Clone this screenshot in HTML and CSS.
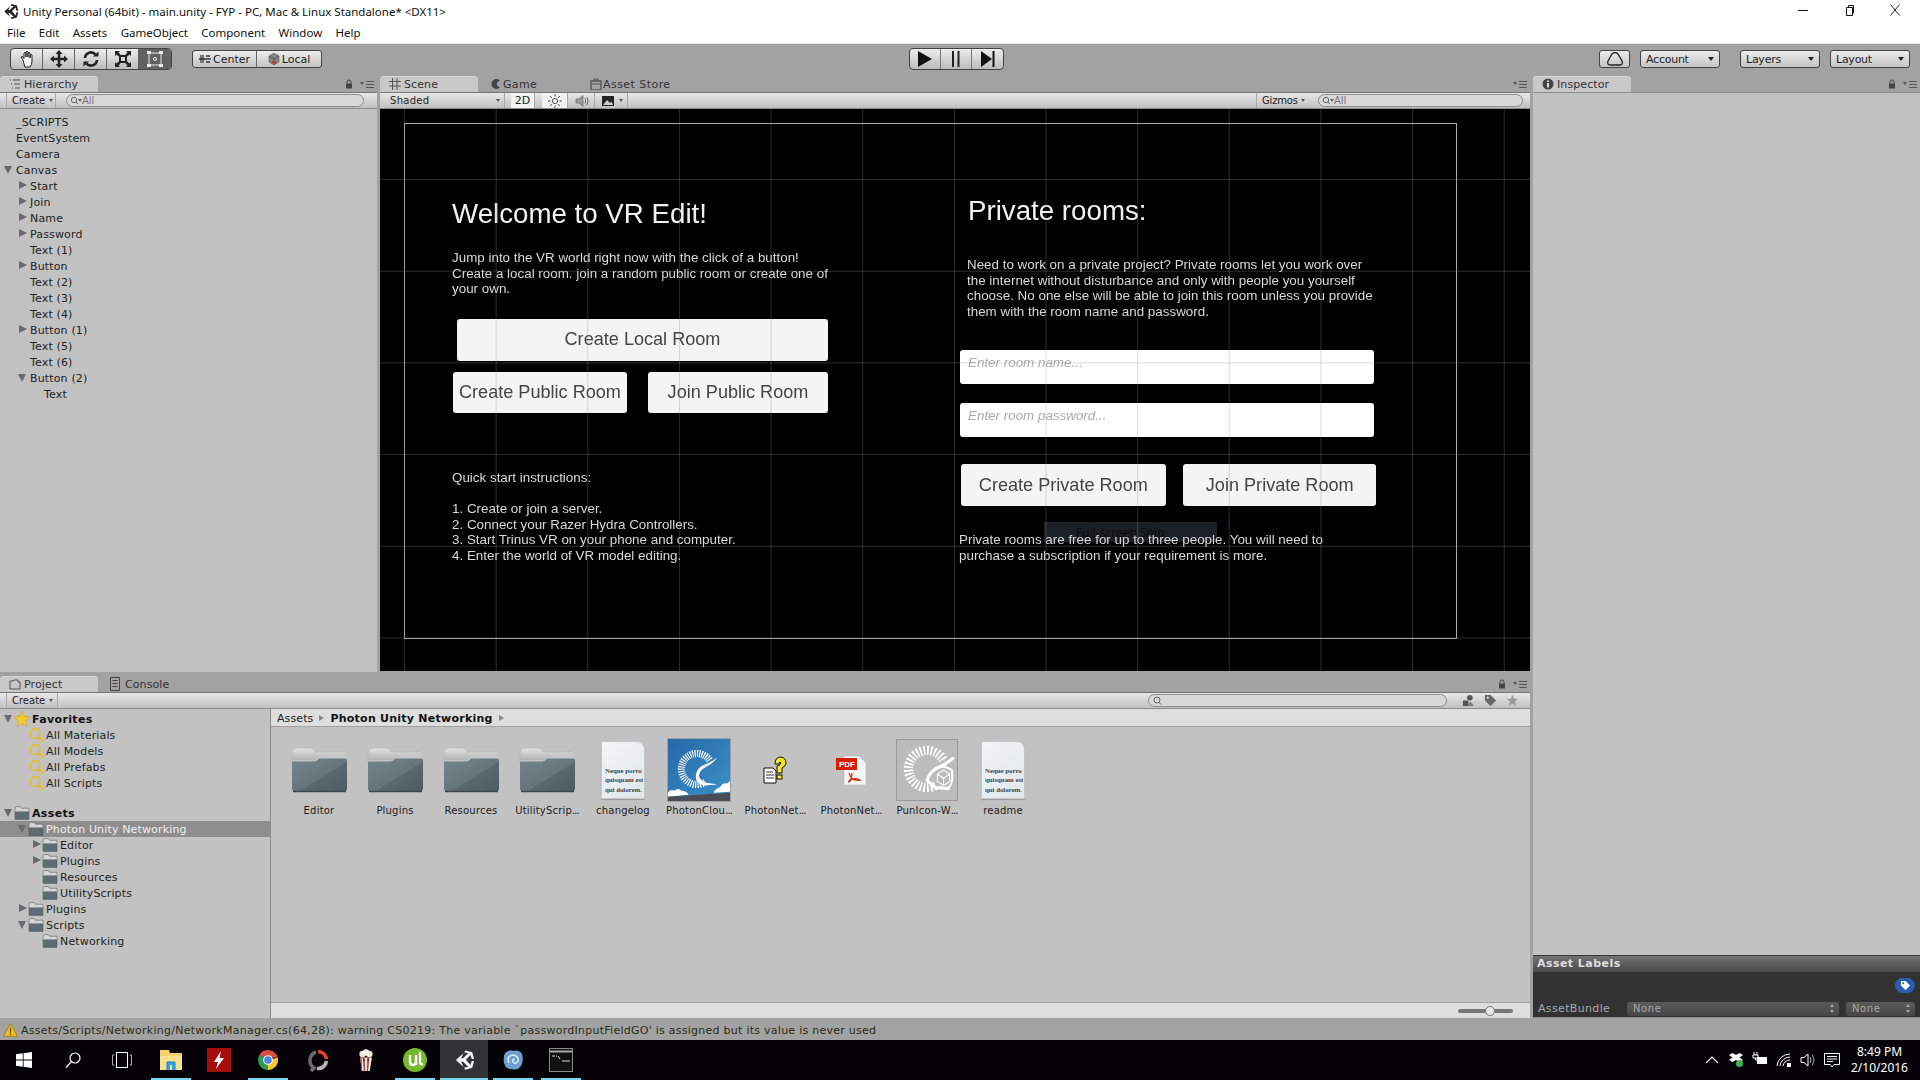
FILE: index.html
```html
<!DOCTYPE html>
<html lang="en">
<head>
<meta charset="utf-8">
<title>Unity Personal</title>
<link rel="stylesheet" href="styles.css">
</head>
<body>
<svg class="defs" aria-hidden="true">
  <defs>
    <linearGradient id="gFolder" x1="0" y1="0" x2="1" y2="1"><stop offset="0" stop-color="#76848c"/><stop offset=".55" stop-color="#66747c"/><stop offset=".56" stop-color="#5a6870"/><stop offset="1" stop-color="#4c5a62"/></linearGradient>
    <linearGradient id="gFolderTop" x1="0" y1="0" x2="0" y2="1"><stop offset="0" stop-color="#e2e2e2"/><stop offset="1" stop-color="#a8a8a8"/></linearGradient>
    <linearGradient id="gBlue" x1="0" y1="0" x2="1" y2="1"><stop offset="0" stop-color="#2867a8"/><stop offset="1" stop-color="#3b93c8"/></linearGradient>
    <symbol id="folderBig" viewBox="0 0 57 46">
      <path d="M1 8 Q1 1 6 1 H19 Q22 1 24 5 H53 Q56 5 56 9 V16 H1Z" fill="url(#gFolderTop)" stroke="#b0b0b0" stroke-width=".5"/>
      <path d="M1 14 H23 Q26 14 28 11 H53 Q56 11 56 14 V41 Q56 45 52 45 H5 Q1 45 1 41Z" fill="url(#gFolder)"/>
      <path d="M1 14 H23 Q26 14 28 11 H56" fill="none" stroke="#e4e4e4" stroke-width=".7"/>
      <path d="M2 44.5 H55" stroke="#3c464c" stroke-width="1.4"/>
    </symbol>
    <symbol id="folderSmall" viewBox="0 0 15 14">
      <path d="M1 3 Q1 1 2 1 H6 L7 2.5 H14 V6 H1Z" fill="#d6d6d6" stroke="#666" stroke-width=".6"/>
      <path d="M1 5 H14 V13 H1Z" fill="#5d6b72" stroke="#4a4f52" stroke-width=".5"/>
      <path d="M1 5 H14" stroke="#eee" stroke-width="1"/>
    </symbol>
    <symbol id="searchGold" viewBox="0 0 15 16">
      <circle cx="6.5" cy="6.5" r="5" fill="none" stroke="#e6c02a" stroke-width="1.6"/>
      <path d="M10 10 L14 14.5" stroke="#e6c02a" stroke-width="2.2" stroke-linecap="round"/>
    </symbol>
    <symbol id="unity" viewBox="0 0 24 24">
      <path d="M13.5 1.5 L21 3.5 L23 11 L20.5 11 L19 6.5 L14 11.8 H14.2 L19 17.5 L20.5 13 L23 13 L21 20.5 L13.5 22.5 L12 20.5 L16.5 19.3 L11 14 H8 L3.5 12 L8 10 H11 L16.5 4.7 L12 3.5Z" fill="currentColor"/>
      <path d="M3 12 L11.5 4.5 L8.5 11 Z M3 12 L11.5 19.5 L8.5 13Z" fill="currentColor"/>
    </symbol>
    <symbol id="lock" viewBox="0 0 8 10"><path d="M2 4.5 V3 a2 2 0 0 1 4 0 V4.5" fill="none" stroke="#444" stroke-width="1"/><rect x="1" y="4.5" width="6" height="5" fill="#444"/></symbol>
    <symbol id="panelMenu" viewBox="0 0 14 8"><path d="M0 2 H4 L2 5Z" fill="#555"/><path d="M6 1.5 H14 M6 4.5 H14 M6 7.5 H14" stroke="#555"/></symbol>
  </defs>
</svg>

<div class="app">
  <header class="titlebar">
    <div class="title-row">
      <svg class="title-logo"><use href="#unity"/></svg>
      <span>Unity Personal (64bit) - main.unity - FYP - PC, Mac &amp; Linux Standalone* &lt;DX11&gt;</span>
      <div class="win-controls">
        <svg class="win-icon" viewBox="0 0 12 12"><path d="M1 6.5 H11" stroke="#111"/></svg>
        <svg class="win-icon" viewBox="0 0 12 12"><path d="M3.5 3.5 H9.5 V11.5 H3.5Z M5.5 3.5 V1.5 H10.5 V9 H9.5" fill="none" stroke="#111"/></svg>
        <svg class="win-icon" viewBox="0 0 12 12"><path d="M1.5 .5 L10.5 11.5 M10.5 .5 L1.5 11.5" stroke="#111" stroke-width=".9"/></svg>
      </div>
    </div>
    <nav class="menu-row">
      <span>File</span><span>Edit</span><span>Assets</span><span>GameObject</span><span>Component</span><span>Window</span><span>Help</span>
    </nav>
  </header>

  <div class="main-toolbar">
    <div class="tool-group">
      <div class="tool-btn"><svg class="tool-icon" viewBox="0 0 18 18"><path d="M5 10 L3 7 Q3.5 5.8 5 7 L6 8.5 V3 Q7 1.6 8 3 V7 V2 Q9 .8 10 2 V7 V3 Q11 2 12 3 V8 V5 Q13 4 14 5 V11 Q14 15 12 17 H7 Q6 14 5 10Z" fill="#f4f4f4" stroke="#222" stroke-width="1"/></svg></div>
      <div class="tool-btn"><svg class="tool-icon" viewBox="0 0 18 18"><path d="M9 0 L12.5 4 H10.3 V7.7 H14 V5.5 L18 9 L14 12.5 V10.3 H10.3 V14 H12.5 L9 18 L5.5 14 H7.7 V10.3 H4 V12.5 L0 9 L4 5.5 V7.7 H7.7 V4 H5.5Z" fill="#222"/></svg></div>
      <div class="tool-btn"><svg class="tool-icon" viewBox="0 0 18 18"><path d="M3 8 A6 6 0 0 1 13.5 4.5 M15 10 A6 6 0 0 1 4.5 13.5" fill="none" stroke="#222" stroke-width="2.6"/><path d="M11 6.5 H16.5 V1.5Z M7 11.5 H1.5 V16.5Z" fill="#222"/></svg></div>
      <div class="tool-btn"><svg class="tool-icon" viewBox="0 0 18 18"><rect x="6" y="6" width="6" height="6" fill="none" stroke="#222" stroke-width="2"/><path d="M1 1 H6 L4.5 2.5 L6.5 4.5 L4.5 6.5 L2.5 4.5 L1 6Z M17 1 H12 L13.5 2.5 L11.5 4.5 L13.5 6.5 L15.5 4.5 L17 6Z M1 17 H6 L4.5 15.5 L6.5 13.5 L4.5 11.5 L2.5 13.5 L1 12Z M17 17 H12 L13.5 15.5 L11.5 13.5 L13.5 11.5 L15.5 13.5 L17 12Z" fill="#222"/></svg></div>
      <div class="tool-btn tool-on"><svg class="tool-icon" viewBox="0 0 18 18"><rect x="3" y="3" width="12" height="12" fill="none" stroke="#e8e8e8" stroke-width="1"/><rect x="1" y="1" width="4" height="3" fill="#eee"/><rect x="13" y="1" width="4" height="3" fill="#eee"/><rect x="1" y="14" width="4" height="3" fill="#eee"/><rect x="13" y="14" width="4" height="3" fill="#eee"/><circle cx="9" cy="9" r="1.5" fill="none" stroke="#eee"/></svg></div>
    </div>
    <div class="pivot-group">
      <div class="pivot-btn pivot-center"><svg class="pivot-icon" viewBox="0 0 12 12"><path d="M1 2 H5 V10 H1Z" fill="#777"/><path d="M0 6 H12 M7 3 H11 M7 9 H11" stroke="#333" stroke-width="1.4"/></svg>Center</div>
      <div class="pivot-btn"><svg class="pivot-icon" viewBox="0 0 12 12"><path d="M6 0 L11 3 V9 L6 12 L1 9 V3Z" fill="#888" stroke="#555" stroke-width=".6"/><path d="M1 3 L6 6 L11 3 M6 6 V12" fill="none" stroke="#444" stroke-width=".8"/><path d="M3 9 L6 11.5 L9 9 L6 7.5Z" fill="#b04040"/></svg>Local</div>
    </div>
    <div class="play-group">
      <div class="play-btn"><svg class="play-icon" viewBox="0 0 16 18"><path d="M1 1 L15 9 L1 17Z" fill="#111"/></svg></div>
      <div class="play-btn"><svg class="play-icon" viewBox="0 0 16 18"><path d="M5 1 V17 M10.5 1 V17" stroke="#222" stroke-width="2"/></svg></div>
      <div class="play-btn"><svg class="play-icon" viewBox="0 0 16 18"><path d="M1 1 L12 9 L1 17Z" fill="#111"/><path d="M13.5 1 V17" stroke="#111" stroke-width="2"/></svg></div>
    </div>
    <div class="right-tools">
      <div class="drop-btn cloud-btn"><svg class="cloud-icon" viewBox="0 0 16 14"><path d="M3 13 Q0 13 1 9 L5 2 Q8 -1 11 2 L15 9 Q16 13 13 13Z" fill="none" stroke="#222" stroke-width="1.3"/></svg></div>
      <div class="drop-btn account-btn"><span>Account</span><i class="caret"></i></div>
      <div class="drop-btn layers-btn"><span>Layers</span><i class="caret"></i></div>
      <div class="drop-btn layout-btn"><span>Layout</span><i class="caret"></i></div>
    </div>
  </div>

  <div class="workspace">
    <div class="left-col">
      <div class="top-row">
        <section class="panel hierarchy">
          <div class="tab-row">
            <div class="tab active"><svg class="tab-icon" viewBox="0 0 12 12"><path d="M1 2 H2 M4 2 H11 M2 6 H3 M5 6 H11 M3 10 H4 M6 10 H11" stroke="#555"/></svg>Hierarchy</div>
            <div class="tab-end"><svg class="lock-icon"><use href="#lock"/></svg><svg class="menu-icon"><use href="#panelMenu"/></svg></div>
          </div>
          <div class="panel-bar">
            <div class="bar-create">Create<i class="caret small"></i></div>
            <div class="search-pill hier-search"><svg class="mag" viewBox="0 0 12 10"><circle cx="4" cy="4" r="2.7" fill="none" stroke="#666"/><path d="M6 6 L8 8" stroke="#666"/><path d="M8 3 H12 L10 6Z" fill="#666"/></svg>All</div>
          </div>
          <div class="tree hier-tree">
            <div class="row d0"><i class="slot"></i>_SCRIPTS</div>
            <div class="row d0"><i class="slot"></i>EventSystem</div>
            <div class="row d0"><i class="slot"></i>Camera</div>
            <div class="row d0"><i class="slot open"></i>Canvas</div>
            <div class="row d1"><i class="slot closed"></i>Start</div>
            <div class="row d1"><i class="slot closed"></i>Join</div>
            <div class="row d1"><i class="slot closed"></i>Name</div>
            <div class="row d1"><i class="slot closed"></i>Password</div>
            <div class="row d1"><i class="slot"></i>Text (1)</div>
            <div class="row d1"><i class="slot closed"></i>Button</div>
            <div class="row d1"><i class="slot"></i>Text (2)</div>
            <div class="row d1"><i class="slot"></i>Text (3)</div>
            <div class="row d1"><i class="slot"></i>Text (4)</div>
            <div class="row d1"><i class="slot closed"></i>Button (1)</div>
            <div class="row d1"><i class="slot"></i>Text (5)</div>
            <div class="row d1"><i class="slot"></i>Text (6)</div>
            <div class="row d1"><i class="slot open"></i>Button (2)</div>
            <div class="row d2"><i class="slot"></i>Text</div>
          </div>
        </section>

        <section class="panel scene">
          <div class="tab-row">
            <div class="tab active"><svg class="tab-icon" viewBox="0 0 12 12"><path d="M3.5 0 V12 M8 0 V12 M0 3.5 H12 M0 8 H12" stroke="#555"/></svg>Scene</div>
            <div class="tab game-tab"><svg class="tab-icon" viewBox="0 0 12 12"><path d="M10 2.5 A5 5 0 1 0 10 9.5 L7 7.5 V4.5Z" fill="#444"/></svg>Game</div>
            <div class="tab store-tab"><svg class="tab-icon" viewBox="0 0 12 12"><path d="M1 3 H11 V12 H1Z" fill="none" stroke="#555" stroke-width="1.3"/><path d="M4 3 V1 H8 V3" fill="none" stroke="#555"/><path d="M1 6 H11" stroke="#555"/></svg>Asset Store</div>
            <div class="tab-end"><svg class="menu-icon"><use href="#panelMenu"/></svg></div>
          </div>
          <div class="panel-bar scene-bar">
            <div class="shaded">Shaded<i class="caret small"></i></div>
            <div class="scene-toggle on twod">2D</div>
            <div class="scene-toggle on"><svg class="scene-ico" viewBox="0 0 14 14"><circle cx="7" cy="7" r="2.6" fill="none" stroke="#555"/><path d="M7 0 V2.5 M7 11.5 V14 M0 7 H2.5 M11.5 7 H14 M2 2 L4 4 M10 10 L12 12 M12 2 L10 4 M4 10 L2 12" stroke="#555"/></svg></div>
            <div class="scene-toggle"><svg class="scene-ico" viewBox="0 0 14 14"><path d="M1 5 H4 L8 1.5 V12.5 L4 9 H1Z" fill="#999" stroke="#666" stroke-width=".7"/><path d="M10 4.5 Q11.5 7 10 9.5 M12 3 Q14 7 12 11" fill="none" stroke="#666"/></svg></div>
            <div class="scene-toggle img-toggle"><svg class="scene-ico" viewBox="0 0 14 14"><rect x="1" y="2" width="12" height="10" fill="#222"/><path d="M2 11 L6 6 L9 9 L10.5 7.5 L12 11Z" fill="#ccc"/></svg><i class="caret small"></i></div>
            <div class="bar-spacer"></div>
            <div class="gizmos">Gizmos<i class="caret small"></i></div>
            <div class="search-pill scene-search"><svg class="mag" viewBox="0 0 12 10"><circle cx="4" cy="4" r="2.7" fill="none" stroke="#666"/><path d="M6 6 L8 8" stroke="#666"/><path d="M8 3 H12 L10 6Z" fill="#666"/></svg>All</div>
          </div>
          <div class="viewport">
            <div class="game-frame">
              <div class="game-col">
                <h1 class="game-title">Welcome to VR Edit!</h1>
                <p class="game-text intro">Jump into the VR world right now with the click of a button!<br>Create a local room. join a random public room or create one of<br>your own.</p>
                <div class="game-btn local-btn">Create Local Room</div>
                <div class="btn-row public-row">
                  <div class="game-btn pub-create">Create Public Room</div>
                  <div class="game-btn pub-join">Join Public Room</div>
                </div>
                <p class="game-text quick">Quick start instructions:<br><br>1. Create or join a server.<br>2. Connect your Razer Hydra Controllers.<br>3. Start Trinus VR on your phone and computer.<br>4. Enter the world of VR model editing.</p>
              </div>
              <div class="game-col right-col">
                <h1 class="game-title private-title">Private rooms:</h1>
                <p class="game-text private-text">Need to work on a private project? Private rooms let you work over<br>the internet without disturbance and only with people you yourself<br>choose. No one else will be able to join this room unless you provide<br>them with the room name and password.</p>
                <div class="game-input first-input">Enter room name...</div>
                <div class="game-input">Enter room password...</div>
                <div class="btn-row private-row">
                  <div class="game-btn priv-create">Create Private Room</div>
                  <div class="game-btn priv-join">Join Private Room</div>
                </div>
                <div class="snip-ghost">Full-screen Snip</div>
                <p class="game-text note">Private rooms are free for up to three people. You will need to<br>purchase a subscription if your requirement is more.</p>
              </div>
            </div>
            <div class="grid-lines"></div>
          </div>
        </section>
      </div>

      <section class="panel project">
        <div class="tab-row project-tabs">
          <div class="tab active"><svg class="tab-icon" viewBox="0 0 12 12"><path d="M1 3 H4 L5 2 H9 V4 H11 V11 H1Z" fill="none" stroke="#555"/></svg>Project</div>
          <div class="tab console-tab"><svg class="tab-icon console-ico" viewBox="0 0 10 14"><path d="M.5 .5 H9.5 V13.5 H.5Z M2.5 3.5 H7.5 M2.5 6.5 H7.5 M2.5 9.5 H7.5" fill="none" stroke="#444"/></svg>Console</div>
          <div class="tab-end"><svg class="lock-icon"><use href="#lock"/></svg><svg class="menu-icon"><use href="#panelMenu"/></svg></div>
        </div>
        <div class="panel-bar project-bar">
          <div class="bar-create project-create">Create<i class="caret small"></i></div>
          <div class="bar-spacer"></div>
          <div class="search-pill project-search"><svg class="mag" viewBox="0 0 12 10"><circle cx="5" cy="4" r="3" fill="none" stroke="#666"/><path d="M7 6.5 L9 8.5" stroke="#666"/></svg></div>
          <svg class="bar-ico" viewBox="0 0 14 14"><circle cx="8.5" cy="4" r="3" fill="#555"/><rect x="1" y="7" width="6" height="6" fill="#555"/><path d="M9 8 L13 13 H6Z" fill="#777"/></svg>
          <svg class="bar-ico" viewBox="0 0 14 14"><path d="M1 1 H7 L13 7 L7 13 L1 7Z" fill="#666"/><circle cx="4" cy="4" r="1.2" fill="#ddd"/></svg>
          <svg class="bar-ico" viewBox="0 0 14 14"><path d="M7 1 L8.8 5 L13 5.4 L9.8 8.2 L10.8 12.6 L7 10.2 L3.2 12.6 L4.2 8.2 L1 5.4 L5.2 5Z" fill="#999"/></svg>
        </div>
        <div class="project-body">
          <div class="tree project-tree">
            <div class="row d0 head"><i class="slot open"></i><svg class="ti" viewBox="0 0 16 16"><path d="M8 0 L10.3 5.4 L16 6 L11.7 9.8 L13 15.5 L8 12.5 L3 15.5 L4.3 9.8 L0 6 L5.7 5.4Z" fill="#f2cb30" stroke="#c89a14" stroke-width=".5"/></svg>Favorites</div>
            <div class="row d1"><i class="slot"></i><svg class="ti"><use href="#searchGold"/></svg>All Materials</div>
            <div class="row d1"><i class="slot"></i><svg class="ti"><use href="#searchGold"/></svg>All Models</div>
            <div class="row d1"><i class="slot"></i><svg class="ti"><use href="#searchGold"/></svg>All Prefabs</div>
            <div class="row d1"><i class="slot"></i><svg class="ti"><use href="#searchGold"/></svg>All Scripts</div>
            <div class="row d0 head assets-head"><i class="slot open"></i><svg class="ti"><use href="#folderSmall"/></svg>Assets</div>
            <div class="row d1 selected"><i class="slot open"></i><svg class="ti"><use href="#folderSmall"/></svg>Photon Unity Networking</div>
            <div class="row d2"><i class="slot closed"></i><svg class="ti"><use href="#folderSmall"/></svg>Editor</div>
            <div class="row d2"><i class="slot closed"></i><svg class="ti"><use href="#folderSmall"/></svg>Plugins</div>
            <div class="row d2"><i class="slot"></i><svg class="ti"><use href="#folderSmall"/></svg>Resources</div>
            <div class="row d2"><i class="slot"></i><svg class="ti"><use href="#folderSmall"/></svg>UtilityScripts</div>
            <div class="row d1"><i class="slot closed"></i><svg class="ti"><use href="#folderSmall"/></svg>Plugins</div>
            <div class="row d1"><i class="slot open"></i><svg class="ti"><use href="#folderSmall"/></svg>Scripts</div>
            <div class="row d2"><i class="slot"></i><svg class="ti"><use href="#folderSmall"/></svg>Networking</div>
          </div>
          <div class="asset-pane">
            <div class="crumbs"><span>Assets</span><i class="crumb-arrow"></i><b>Photon Unity Networking</b><i class="crumb-arrow"></i></div>
            <div class="asset-grid">
              <div class="asset"><div class="asset-icon"><svg class="big-folder"><use href="#folderBig"/></svg></div><div class="asset-label">Editor</div></div>
              <div class="asset"><div class="asset-icon"><svg class="big-folder"><use href="#folderBig"/></svg></div><div class="asset-label">Plugins</div></div>
              <div class="asset"><div class="asset-icon"><svg class="big-folder"><use href="#folderBig"/></svg></div><div class="asset-label">Resources</div></div>
              <div class="asset"><div class="asset-icon"><svg class="big-folder"><use href="#folderBig"/></svg></div><div class="asset-label">UtilityScrip<span class="dots">...</span></div></div>
              <div class="asset"><div class="asset-icon"><div class="doc">Neque porro<br>quisquam est<br>qui dolorem.</div></div><div class="asset-label">changelog</div></div>
              <div class="asset"><div class="asset-icon"><svg class="thumb blue-thumb" viewBox="0 0 60 60"><rect width="60" height="60" fill="url(#gBlue)"/><path d="M40.3 20.4 A15 15 0 1 0 36.6 41.3" fill="none" stroke="#fff" stroke-width="7" stroke-dasharray="1.1 1.1"/><path d="M48 18 Q42 25 35 28 Q30 31 30 36 Q31 40 36 42 L48 44 L34 45 Q26 42 27 35 Q28 28 35 25 Q41 23 48 18Z" fill="#fff"/><path d="M0 52 Q2 48 6 50 Q10 47 13 50 Q18 50 20 54 L0 56Z M60 41 V51 L44 52 Q46 48 50 47 Q53 42 57 43Z" fill="#fff"/><path d="M0 56 L60 52 V60 H0Z" fill="#4a4c54"/></svg></div><div class="asset-label">PhotonClou<span class="dots">...</span></div></div>
              <div class="asset"><div class="asset-icon"><svg class="help" viewBox="0 0 24 29"><path d="M1 12 H10 L13 15 V27 H1Z" fill="#fff" stroke="#111"/><path d="M3 16 H10 M3 19 H11 M3 22 H11" stroke="#333"/><path d="M12 8 Q12 1 18 1 Q23 2 23 7 Q23 10 19 12 V17 H14 V10 Q18 9 18 7 Q17 5 16 7 V8Z" fill="#f5ea1e" stroke="#111"/><rect x="14" y="19" width="5" height="4" fill="#f5ea1e" stroke="#111"/></svg></div><div class="asset-label">PhotonNet<span class="dots">...</span></div></div>
              <div class="asset"><div class="asset-icon"><svg class="pdf" viewBox="0 0 32 31"><path d="M9 1 H24 L31 8 V30 H9Z" fill="#f4f5f6" stroke="#bbb" stroke-width=".6"/><rect x="1" y="3" width="21" height="12" fill="#d81e05"/><text x="4" y="12" class="pdf-text">PDF</text><path d="M14 18 Q17 27 25 25 Q18 22 15 26 Q13 28 14 26 Q17 24 17 18" fill="none" stroke="#d8301a" stroke-width="1.3"/></svg></div><div class="asset-label">PhotonNet<span class="dots">...</span></div></div>
              <div class="asset"><div class="asset-icon"><svg class="thumb" viewBox="0 0 60 60"><rect x=".5" y=".5" width="59" height="59" fill="#bcbcbc" stroke="#999"/><path d="M45.6 20 A18 18 0 1 0 39 44.6" fill="none" stroke="#fff" stroke-width="9" stroke-dasharray="1.7 1.7"/><path d="M56 18 Q46 26 38 29 Q32 33 30 40 L38 47 L52 48" fill="none" stroke="#fff" stroke-width="3"/><path d="M38 29 Q46 24 54 30 Q56 44 50 48" fill="none" stroke="#fff" stroke-width="2"/><path d="M46 30 L52 34 V41 L46 45 L40 41 V34Z M40 34 L46 38 L52 34 M46 38 V45" fill="none" stroke="#fff"/></svg></div><div class="asset-label">PunIcon-W<span class="dots">...</span></div></div>
              <div class="asset"><div class="asset-icon"><div class="doc">Neque porro<br>quisquam est<br>qui dolorem.</div></div><div class="asset-label">readme</div></div>
            </div>
            <div class="asset-foot"><div class="slider"><i class="knob"></i></div></div>
          </div>
        </div>
      </section>
    </div>

    <aside class="panel inspector">
      <div class="tab-row">
        <div class="tab active"><svg class="tab-icon info" viewBox="0 0 12 12"><circle cx="6" cy="6" r="5.5" fill="#444"/><path d="M6 2.5 V4 M6 5 V9.5" stroke="#fff" stroke-width="1.6"/></svg>Inspector</div>
        <div class="tab-end"><svg class="lock-icon"><use href="#lock"/></svg><svg class="menu-icon"><use href="#panelMenu"/></svg></div>
      </div>
      <div class="inspector-body"></div>
      <div class="labels-head">Asset Labels</div>
      <div class="labels-body">
        <div class="tag-row"><div class="tag-pill"><svg class="tag-ico" viewBox="0 0 12 12"><path d="M1 1 H6 L11 6 L6 11 L1 6Z" fill="#fff"/><circle cx="3.5" cy="3.5" r="1" fill="#2a5db0"/></svg></div></div>
        <div class="bundle-row">
          <span class="bundle-label">AssetBundle</span>
          <div class="dark-drop wide-drop"><span>None</span><i class="updown"></i></div>
          <div class="dark-drop narrow-drop"><span>None</span><i class="updown"></i></div>
        </div>
      </div>
    </aside>
  </div>

  <div class="statusbar">
    <svg class="warn" viewBox="0 0 14 13"><path d="M7 .5 L13.5 12.5 H.5Z" fill="#f0c020" stroke="#8a6a10" stroke-width=".6"/><path d="M7 4.5 V9 M7 10 V11.5" stroke="#6a5008" stroke-width="1.2"/></svg>
    <span>Assets/Scripts/Networking/NetworkManager.cs(64,28): warning CS0219: The variable `passwordInputFieldGO' is assigned but its value is never used</span>
  </div>

  <footer class="taskbar">
    <div class="task-slot"><svg class="t-ico t16" viewBox="0 0 16 16"><path d="M0 2.3 L6.8 1.3 V7.6 H0Z M7.6 1.2 L16 0 V7.6 H7.6Z M0 8.4 H6.8 V14.7 L0 13.7Z M7.6 8.4 H16 V16 L7.6 14.8Z" fill="#fff"/></svg></div>
    <div class="task-slot"><svg class="t-ico t16" viewBox="0 0 16 16"><circle cx="10" cy="6" r="5" fill="none" stroke="#fff" stroke-width="1.2"/><path d="M6.4 9.6 L1 15.5" stroke="#fff" stroke-width="1.4"/></svg></div>
    <div class="task-slot"><svg class="t-ico t20" viewBox="0 0 20 16"><rect x="4.5" y=".5" width="11" height="15" fill="none" stroke="#fff"/><path d="M2.5 3 H.5 V13 H2.5 M17.5 3 H19.5 V13 H17.5" fill="none" stroke="#aaa"/></svg></div>
    <div class="task-slot run"><svg class="t-ico t22" viewBox="0 0 22 22"><path d="M0 1 H9 L10 4 H22 V21 H0Z" fill="#f3d26a"/><path d="M0 7 H22 V21 H0Z" fill="#f8e08e"/><path d="M7 13 H15 V21 H12 V16 H10 V21 H7Z" fill="#2aa8e8"/><path d="M7 21 V13 H15 V21" fill="none" stroke="#1c86c0"/></svg></div>
    <div class="task-slot"><svg class="t-ico t24" viewBox="0 0 24 24"><rect width="24" height="24" fill="#a60d0d"/><path d="M14 3 L7 14 H11 L9 21 L17 10 H12.5Z" fill="#fff"/></svg></div>
    <div class="task-slot run"><svg class="t-ico t22" viewBox="0 0 24 24"><path d="M12 12 L2.6 6.5 A11 11 0 0 1 22.7 9.5 H12Z" fill="#dd4b3e"/><path d="M12 12 L12 23 A11 11 0 0 1 2.6 6.5Z" fill="#2f9e4c"/><path d="M12 12 L22.7 9.5 A11 11 0 0 1 12 23Z" fill="#f6c82e"/><circle cx="12" cy="12" r="5.3" fill="#fff"/><circle cx="12" cy="12" r="4.2" fill="#4a86e8"/></svg></div>
    <div class="task-slot"><svg class="t-ico t24" viewBox="0 0 24 24"><path d="M11 4 A9 9 0 0 0 9 20 L6 23" fill="none" stroke="#6a6a6a" stroke-width="3.6"/><path d="M13 3.5 A8.5 8.5 0 0 1 21.5 11" fill="none" stroke="#e2422b" stroke-width="3.6"/><path d="M21.5 13 A8.5 8.5 0 0 1 12 20.5" fill="none" stroke="#b8b8b8" stroke-width="3.6"/></svg></div>
    <div class="task-slot"><svg class="t-ico t22" viewBox="0 0 18 26"><path d="M2 10 L4.5 26 H13.5 L16 10Z" fill="#f4eee6"/><path d="M5 10 L6.5 26 H8 L7.5 10Z M10.5 10 L10 26 H11.5 L13 10Z M2 10 L3.5 26 H4.5 L3.8 10Z" fill="#c43a3a"/><circle cx="5" cy="6" r="3.8" fill="#efe8d8"/><circle cx="13" cy="6" r="3.8" fill="#efe8d8"/><circle cx="9" cy="4" r="3.8" fill="#f8f4e8"/><circle cx="6.5" cy="13" r="1" fill="#222"/><circle cx="11.5" cy="13" r="1" fill="#222"/></svg></div>
    <div class="task-slot run"><svg class="t-ico t24" viewBox="0 0 24 24"><circle cx="12" cy="12" r="12" fill="#77b82a"/><path d="M7 7 V14 Q7 17 10 17 Q12.5 17 13 14 V7 M13 14 V17 M17 4 V14 Q17 17 20 16" fill="none" stroke="#fff" stroke-width="2.4"/></svg></div>
    <div class="task-slot run active"><svg class="t-ico t22 unity-task"><use href="#unity"/></svg></div>
    <div class="task-slot run"><svg class="t-ico t22" viewBox="0 0 20 22"><path d="M2 4 Q7 0 10 2 Q16 0 19 5 Q21 12 18 17 Q14 22 9 20 Q3 21 1 14 Q0 8 2 4Z" fill="#6f9fd0"/><path d="M6 14 Q3 7 10 6 Q16 7 15 12 Q13 16 10 13 Q9 10 11.5 10" fill="none" stroke="#dfeaf6" stroke-width="1.6"/></svg></div>
    <div class="task-slot run"><svg class="t-ico t24" viewBox="0 0 24 24"><rect x=".5" y=".5" width="23" height="23" fill="#101010" stroke="#8a8a8a"/><path d="M1 3.5 H23" stroke="#aaa" stroke-width="2"/><path d="M3 8 H6 M7 8 H8 M9 8 L11 11 M13 13 H21" stroke="#ddd"/></svg></div>
    <div class="tray">
      <svg class="tray-ico" viewBox="0 0 16 16"><path d="M2 11 L8 5 L14 11" fill="none" stroke="#fff" stroke-width="1.2"/></svg>
      <svg class="tray-ico" viewBox="0 0 16 16"><path d="M1 3 L4.5 1 L8 3 L11.5 1 L15 3 L11.5 5.5 L15 8 L11.5 10 L8 8 L4.5 10 L1 8 L4.5 5.5Z" fill="#fff"/><circle cx="11.5" cy="11.5" r="3.5" fill="#3cb24a"/></svg>
      <svg class="tray-ico" viewBox="0 0 16 16"><path d="M2 0 V3 M5 0 V3 M1 3 H6 V6 H1Z M3.5 6 V8 H5" fill="none" stroke="#fff"/><rect x="5" y="5" width="10" height="7" fill="#fff"/></svg>
      <svg class="tray-ico" viewBox="0 0 16 16"><path d="M1 14 A13 13 0 0 1 14 2 M4 14 A10 10 0 0 1 14 5 M7 14 A7 7 0 0 1 14 8" fill="none" stroke="#fff"/><rect x="11" y="11" width="4" height="4" fill="#fff"/></svg>
      <svg class="tray-ico" viewBox="0 0 16 16"><path d="M1 5.5 H4 L8 2 V14 L4 10.5 H1Z" fill="none" stroke="#fff"/><path d="M10 5 Q12 8 10 11 M12.5 3 Q15.5 8 12.5 13" fill="none" stroke="#aaa"/></svg>
      <svg class="tray-ico" viewBox="0 0 16 16"><path d="M.5 1.5 H15.5 V12.5 H10 L8 15 L6 12.5 H.5Z M3 4.5 H13 M3 7 H13 M3 9.5 H9" fill="none" stroke="#fff"/></svg>
      <div class="clock"><span>8:49 PM</span><span>2/10/2016</span></div>
    </div>
  </footer>
</div>
</body>
</html>
```

FILE: styles.css
```css
* { box-sizing: border-box; }
html, body { margin: 0; padding: 0; background: #a2a2a2; }
body { font-family: "DejaVu Sans", sans-serif; font-size: 11px; color: #1c1c1c; }
.defs { position: absolute; width: 0; height: 0; }
i { display: block; font-style: normal; }
svg { display: block; flex: none; }

.app { width: 1920px; height: 1080px; display: flex; flex-direction: column; overflow: hidden; }

/* title bar */
.titlebar { height: 43px; background: #fff; font-family: "Noto Sans", sans-serif; font-size: 11.5px; color: #111; }
.title-row { height: 22px; display: flex; align-items: center; padding-left: 2px; }
.title-logo { width: 17px; height: 17px; margin-right: 4px; color: #222; }
.win-controls { margin-left: auto; margin-bottom: 2px; display: flex; gap: 34px; padding-right: 19px; }
.win-icon { width: 12px; height: 12px; }
.menu-row { height: 21px; display: flex; align-items: center; gap: 13.4px; padding-left: 7px; }

/* main toolbar */
.main-toolbar { height: 33px; display: flex; align-items: flex-start; background: #a2a2a2; padding: 4px 10px 0; border-top: 1px solid #e8e8e8; font-size: 11px; }
.tool-group, .play-group { display: flex; height: 22px; border: 1px solid #444; border-radius: 4px; overflow: hidden; background: linear-gradient(#ededed, #bcbcbc); }
.tool-btn { width: 32px; display: flex; align-items: center; justify-content: center; border-right: 1px solid #666; }
.tool-btn:last-child { border-right: 0; }
.tool-on { background: #626262; }
.tool-icon { width: 18px; height: 18px; }
.pivot-group { display: flex; height: 18px; margin: 2px 0 0 20px; border: 1px solid #444; border-radius: 3px; overflow: hidden; background: linear-gradient(#ededed, #c4c4c4); }
.pivot-btn { width: 64px; display: flex; align-items: center; justify-content: center; gap: 2px; }
.pivot-center { border-right: 1px solid #666; }
.pivot-icon { width: 12px; height: 12px; }
.play-group { margin-left: 587px; }
.play-btn { width: 31px; display: flex; align-items: center; justify-content: center; border-right: 1px solid #777; }
.play-btn:last-child { border-right: 0; }
.play-icon { width: 16px; height: 18px; }
.right-tools { margin-left: auto; display: flex; margin-top: 2px; }
.drop-btn { height: 18px; border: 1px solid #444; border-radius: 3px; background: linear-gradient(#ededed, #c4c4c4); display: flex; align-items: center; padding: 0 5px; justify-content: space-between; font-size: 11px; letter-spacing: -.25px; }
.cloud-btn { width: 31px; margin-right: 10px; justify-content: center; padding: 0; }
.cloud-icon { width: 16px; height: 14px; }
.account-btn { width: 80px; margin-right: 20px; }
.layers-btn { width: 80px; margin-right: 10px; }
.layout-btn { width: 80px; }
.caret { width: 0; height: 0; border-left: 3px solid transparent; border-right: 3px solid transparent; border-top: 4px solid #222; }
.caret.small { border-left-width: 2px; border-right-width: 2px; border-top: 3px solid #555; }

/* panels */
.workspace { height: 942px; display: flex; }
.left-col { width: 1530px; display: flex; flex-direction: column; }
.top-row { height: 596px; display: flex; gap: 3px; }
.panel { display: flex; flex-direction: column; min-width: 0; }
.hierarchy { width: 377px; }
.scene { flex: 1; }
.tab-row { height: 16px; flex: none; display: flex; align-items: stretch; color: #333; position: relative; letter-spacing: .1px; }
.tab { width: 98px; display: flex; align-items: center; gap: 3px; padding-left: 9px; }
.tab.active { background: #c8c8c8; border-radius: 4px 4px 0 0; box-shadow: inset 0 1px 0 #d8d8d8; }
.game-tab { width: 100px; padding-left: 12px; gap: 1px; letter-spacing: .35px; }
.store-tab { width: 110px; padding-left: 12px; gap: 1px; letter-spacing: .45px; }
.tab-icon { width: 12px; height: 12px; }
.tab-end { margin-left: auto; display: flex; align-items: center; gap: 7px; padding-right: 3px; }
.lock-icon { width: 8px; height: 10px; }
.menu-icon { width: 14px; height: 8px; }
.panel-bar { height: 17px; flex: none; display: flex; align-items: center; border-top: 1px solid #777; border-bottom: 1px solid #8c8c8c; background: linear-gradient(#e8e8e8, #c0c0c0); padding-left: 6px; }
.bar-create { width: 50px; height: 100%; display: flex; align-items: center; gap: 4px; padding-left: 5px; border-left: 1px solid #a8a8a8; border-right: 1px solid #a8a8a8; font-size: 10px; color: #222; }
.search-pill { height: 13px; border: 1px solid #8a8a8a; border-radius: 7px; background: #d8d8d8; display: flex; align-items: center; gap: 0; padding-left: 3px; color: #777; font-size: 10px; }
.mag { width: 12px; height: 10px; }
.hier-search { width: 298px; margin-left: 10px; }
.bar-spacer { flex: 1; }

.scene-bar { padding-left: 1px; font-size: 10px; }
.shaded { width: 124px; height: 100%; display: flex; align-items: center; justify-content: space-between; padding: 0 4px 0 9px; border-right: 1px solid #a8a8a8; letter-spacing: .3px; }
.scene-toggle { width: 26px; height: 100%; display: flex; align-items: center; justify-content: center; margin-left: 1px; border-right: 1px solid #a8a8a8; }
.scene-toggle.on { background: #f2f2f2; }
.twod { margin-left: 6px; width: 24px; font-size: 11px; margin-right: 6px; }
.img-toggle { width: 32px; gap: 4px; }
.scene-ico { width: 14px; height: 14px; }
.gizmos { width: 56px; height: 100%; display: flex; align-items: center; gap: 3px; padding-left: 5px; border-left: 1px solid #a8a8a8; letter-spacing: -.2px; }
.scene-search { width: 205px; margin: 0 7px 0 6px; }

/* scene viewport */
.viewport { height: 562px; background: #000; position: relative; overflow: hidden; font-family: "Liberation Sans", Arial, sans-serif; }
.game-frame { position: absolute; left: 24px; top: 14px; width: 1053px; height: 516px; border: 1px solid #a8a8a8; display: grid; grid-template-columns: 555px 1fr; filter: blur(.35px); }
.grid-lines { position: absolute; inset: 0; pointer-events: none;
  background-image: linear-gradient(to right, rgba(140,140,140,.32) 1px, transparent 1px), linear-gradient(to bottom, rgba(140,140,140,.32) 1px, transparent 1px);
  background-size: 91.65px 91.7px; background-position: 24px -21.7px; }
.game-col { padding-left: 47px; min-width: 0; }
.right-col { padding-left: 0; position: relative; }
.game-title { margin: 72px 0 0; font-size: 27.7px; font-weight: 400; line-height: 36px; color: #f2f2f2; }
.game-text { margin: 0; font-size: 13.4px; line-height: 15.7px; color: #d8d8d8; white-space: nowrap; position: relative; z-index: 1; }
.intro { margin-top: 18px; }
.game-btn { background: #f4f4f4; color: #444; border-radius: 3px; display: flex; align-items: center; justify-content: center; font-size: 18.1px; height: 41.5px; }
.local-btn { width: 371px; margin: 22px 0 0 5px; }
.btn-row { display: flex; }
.public-row { margin: 11px 0 0 1px; gap: 21px; }
.pub-create { width: 174px; }
.pub-join { width: 180px; }
.quick { margin-top: 56.5px; }
.private-title { margin: 69px 0 0 8px; }
.private-text { margin: 28px 0 0 7px; }
.game-input { height: 34px; width: 414px; background: #fff; border-radius: 3px; color: #aaa; font-style: italic; font-size: 13.4px; line-height: 26px; padding-left: 8px; }
.first-input { margin-top: 30.5px; }
.game-input + .game-input { margin-top: 18.4px; }
.private-row { margin: 27.6px 0 0 1px; gap: 17.3px; }
.priv-create { width: 204.7px; height: 42px; }
.priv-join { width: 193.5px; height: 42px; }
.snip-ghost { position: absolute; left: 84px; top: 398px; width: 173px; height: 20px; background: #1a2026; color: #0c0c0c; font-family: "Noto Sans", sans-serif; font-size: 12px; padding-left: 32px; line-height: 21px; }
.note { margin: 25.8px 0 0 -1px; }

/* tree */
.tree { background: #c2c2c2; color: #1e1e1e; }
.hier-tree { height: 563px; padding-top: 5px; }
.row { height: 16px; display: flex; align-items: center; letter-spacing: .15px; white-space: nowrap; }
.d0 { padding-left: 4px; }
.d1 { padding-left: 18px; }
.d2 { padding-left: 32px; }
.slot { width: 12px; height: 10px; flex: none; position: relative; }
.slot.open::before { content: ""; position: absolute; left: 0; top: 1px; border-left: 4.5px solid transparent; border-right: 4.5px solid transparent; border-top: 8px solid #6a6a6a; }
.slot.closed::before { content: ""; position: absolute; left: 1px; top: 0; border-top: 4.5px solid transparent; border-bottom: 4.5px solid transparent; border-left: 8px solid #6a6a6a; }

/* project */
.project { flex: 1; }
.project-tabs { height: 20px; padding-top: 4px; }
.console-tab { padding-left: 12px; margin-left: 0; gap: 5px; }
.console-ico { width: 10px; height: 14px; }
.project-bar { padding: 0 2px 0 6px; }
.project-create { width: 52px; }
.project-search { width: 299px; margin-right: 15px; }
.bar-ico { width: 13px; height: 13px; margin-right: 9px; }
.project-body { flex: 1; display: flex; min-height: 0; }
.project-tree { width: 271px; border-right: 1px solid #8c8c8c; padding-top: 2px; }
.project-tree .slot { width: 10px; }
.ti { width: 16px; height: 16px; margin-right: 2px; }
.head { font-weight: 700; color: #111; letter-spacing: .35px; }
.assets-head { margin-top: 14px; }
.selected { background: #8e8e8e; color: #eee; }
.asset-pane { flex: 1; display: flex; flex-direction: column; background: #c2c2c2; min-width: 0; }
.crumbs { height: 18px; flex: none; background: #dedede; border-bottom: 1px solid #a0a0a0; display: flex; align-items: center; padding: 1px 0 0 6px; color: #222; gap: 6px; letter-spacing: .1px; }
.crumbs b { color: #111; letter-spacing: .25px; }
.crumb-arrow { border-top: 3px solid transparent; border-bottom: 3px solid transparent; border-left: 5px solid #8a8a8a; }
.asset-grid { flex: 1; display: flex; align-items: flex-start; padding: 11px 0 0 10px; }
.asset { width: 76px; flex: none; display: flex; flex-direction: column; align-items: center; }
.asset-icon { height: 64px; width: 100%; display: flex; align-items: center; justify-content: center; }
.asset-label { margin-top: 2px; line-height: 14px; font-size: 10px; letter-spacing: .2px; white-space: nowrap; color: #1c1c1c; }
.dots { letter-spacing: -.9px; }
.big-folder { width: 57px; height: 46px; }
.doc { width: 44px; height: 58px; background: linear-gradient(135deg, #f2f5f7, #dfe6ea); border: 1px solid #c8c8c8; border-top-right-radius: 8px; font-family: "Liberation Serif", serif; font-weight: 700; font-size: 6.8px; line-height: 9.4px; color: #444; padding: 24px 0 0 3px; white-space: nowrap; box-shadow: 0 1px 1px #999; }
.thumb { width: 62px; height: 62px; }
.blue-thumb { box-shadow: 0 0 0 1px #a0a0a0; }
.help { width: 24px; height: 29px; }
.pdf { width: 32px; height: 31px; }
.pdf-text { font-family: "Liberation Sans", sans-serif; font-size: 8px; font-weight: 700; fill: #fff; }
.asset-foot { height: 16px; flex: none; background: #dedede; border-top: 1px solid #a0a0a0; position: relative; }
.slider { position: absolute; left: 1187px; top: 6px; width: 55px; height: 4px; background: #777; border-radius: 2px; }
.knob { position: absolute; left: 27px; top: -3px; width: 10px; height: 10px; border-radius: 50%; background: #e8e8e8; border: 1px solid #777; }

/* inspector */
.inspector { flex: 1; margin-left: 3px; }
.inspector-body { flex: 1; background: #c2c2c2; border-top: 1px solid #8c8c8c; }
.labels-head { height: 17px; flex: none; background: linear-gradient(#727272, #4a4a4a); border-top: 1px solid #383838; color: #dedede; font-weight: 700; letter-spacing: .45px; padding-left: 4px; line-height: 16px; }
.labels-body { height: 46px; flex: none; background: #323232; display: flex; flex-direction: column; padding: 6px 5px 0 5px; border-bottom: 1px solid #8a8a8a; }
.tag-row { display: flex; justify-content: flex-end; height: 15px; }
.tag-pill { width: 20px; height: 15px; border-radius: 8px; background: #2a5db0; display: flex; align-items: center; justify-content: center; }
.tag-ico { width: 11px; height: 11px; }
.bundle-row { display: flex; align-items: center; margin-top: 8px; height: 15px; color: #a8a8a8; }
.bundle-label { width: 89px; letter-spacing: .35px; }
.dark-drop { height: 14px; border-radius: 3px; background: linear-gradient(#5c5c5c, #464646); display: flex; align-items: center; justify-content: space-between; padding: 0 4px 0 6px; color: #a8a8a8; font-size: 10px; letter-spacing: .6px; }
.wide-drop { width: 212px; margin-right: 7px; }
.narrow-drop { width: 69px; }
.updown { width: 5px; height: 9px; position: relative; }
.updown::before { content: ""; position: absolute; top: 0; border-left: 2.5px solid transparent; border-right: 2.5px solid transparent; border-bottom: 3.5px solid #aaa; }
.updown::after { content: ""; position: absolute; bottom: 0; border-left: 2.5px solid transparent; border-right: 2.5px solid transparent; border-top: 3.5px solid #aaa; }

/* status */
.statusbar { height: 22px; background: #a2a2a2; display: flex; align-items: center; gap: 3px; padding: 2px 0 0 3px; color: #2c2c14; letter-spacing: .26px; white-space: nowrap; }
.warn { width: 15px; height: 14px; }

/* taskbar */
.taskbar { height: 40px; background: #050308; display: flex; align-items: stretch; color: #fff; font-family: "Noto Sans", sans-serif; font-size: 12px; }
.task-slot { width: 48px; margin-right: .87px; display: flex; align-items: center; justify-content: center; position: relative; }
.task-slot.run::after { content: ""; position: absolute; left: 4px; right: 4px; bottom: 0; height: 2px; background: #74d8f2; }
.task-slot.active { background: #333336; }
.task-slot.active::after { left: 0; right: 0; }
.t-ico.t16 { width: 16px; height: 16px; }
.t20 { width: 20px; height: 16px; }
.t22 { width: 22px; height: 22px; }
.t24 { width: 24px; height: 24px; }
.unity-task { color: #f4f4f4; }
.tray { margin-left: auto; display: flex; align-items: center; gap: 8px; padding-right: 9px; }
.tray-ico { width: 16px; height: 16px; }
.clock { width: 63px; display: flex; flex-direction: column; align-items: center; line-height: 16px; }
```
